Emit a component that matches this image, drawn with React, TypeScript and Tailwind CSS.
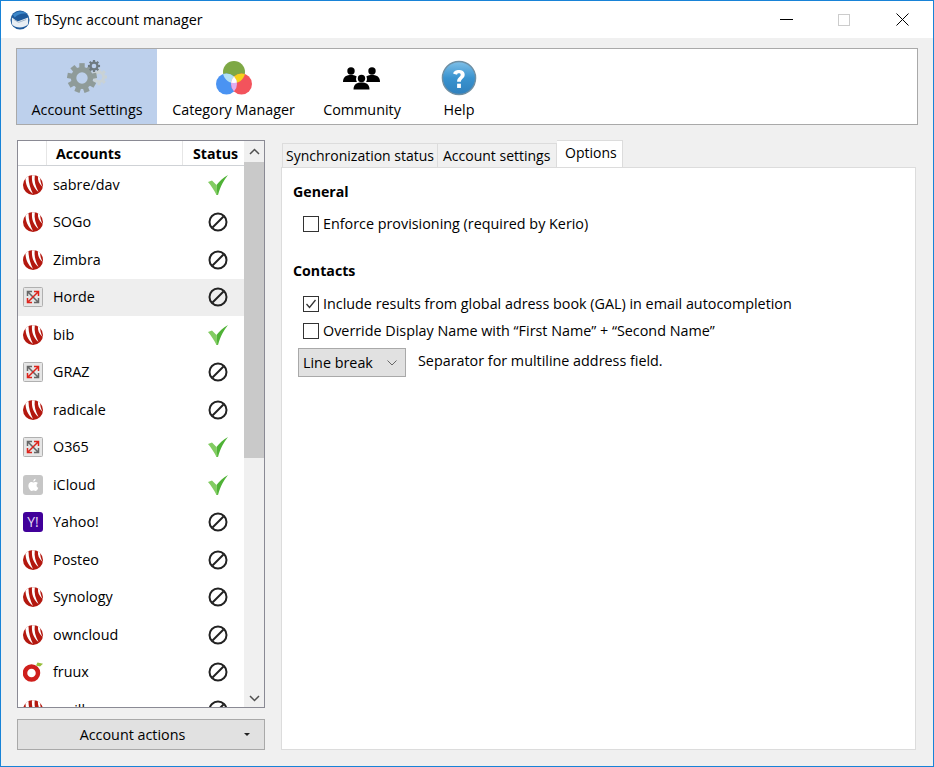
import React from "react";

function Sabre() {
  return (
    <svg width="20" height="20" viewBox="0 0 20 20">
      <circle cx="10" cy="10" r="10" fill="#b3180f" />
      <path d="M2.500 3 C2.500 9 4.500 14.500 10 19 C7.500 13.500 5.500 8 5.500 1.200 Z" fill="#fff" />
      <path d="M9 0.200 C8.500 7 10 12 15.500 17 C12.500 11.500 11 6 11.800 0.300 Z" fill="#fff" />
      <path d="M15 1.500 C14.500 5 16 9 19.700 12 C17.800 8.500 17 5 17.300 3 Z" fill="#fff" />
    </svg>
  );
}

function Exchange() {
  return (
    <svg width="20" height="20" viewBox="0 0 20 20">
      <rect x="0.500" y="0.500" width="19" height="19" rx="1" fill="#e6e6e6" stroke="#b0b0b0" />
      <g fill="none" strokeWidth="1.500">
        <path d="M4.500 9 L4.500 4.500 L9 4.500 M4.500 4.500 L15.500 15.500 M11 15.500 L15.500 15.500 L15.500 11" stroke="#666" />
        <path d="M11 4.500 L15.500 4.500 L15.500 9 M15.500 4.500 L4.500 15.500 M4.500 11 L4.500 15.500 L9 15.500" stroke="#dc241c" />
      </g>
    </svg>
  );
}

function ICloud() {
  return (
    <svg width="20" height="20" viewBox="0 0 20 20">
      <rect width="20" height="20" rx="3" fill="#c6c6c6" />
      <path d="M13.600 10.400c0-1.500 1.200-2.200 1.300-2.300-.7-1-1.800-1.200-2.200-1.200-.9-.1-1.800.6-2.300.6s-1.200-.6-2-.6c-1 0-2 .6-2.500 1.500-1.100 1.900-.3 4.600.8 6.100.5.700 1.100 1.600 1.900 1.500.8 0 1-.5 2-.5s1.200.5 2 .5 1.400-.8 1.900-1.500c.6-.8.8-1.600.8-1.700-.1 0-1.700-.6-1.700-2.400z" fill="#fff" />
      <path d="M12 5.700c.4-.5.7-1.200.6-1.900-.6 0-1.300.4-1.700.9-.4.400-.7 1.100-.6 1.800.7.100 1.300-.3 1.700-.8z" fill="#fff" />
    </svg>
  );
}

function Yahoo() {
  return (
    <div className="flex h-5 w-5 items-center justify-center rounded-[3px] bg-[#41009a] text-[14px] font-normal leading-none text-[#e6dcf4]">
      Y!
    </div>
  );
}

function Fruux() {
  return (
    <svg width="20" height="20" viewBox="0 0 20 20">
      <circle cx="8.500" cy="11" r="6.500" fill="none" stroke="#cf1f1c" strokeWidth="4.500" />
      <path d="M13 3.500 L14.500 0.500 L20 1.800 L17 4.500 Z" fill="#96bd3a" />
    </svg>
  );
}

function Check() {
  return (
    <svg width="20" height="20" viewBox="0 0 20 20">
      <path d="M8.500 10 C11 6.500 15 3 20 0 C16 5 12.500 11 10 20 L8.500 20 Z" fill="#4fb236" />
      <path d="M0 7 L4 5.500 L8.500 10 L9.500 20 L8.500 20 C6 15 3 10.500 0 7 Z" fill="#82cc62" />
    </svg>
  );
}

function Blocked() {
  return (
    <svg width="20" height="20" viewBox="0 0 20 20">
      <circle cx="10" cy="10" r="8.500" fill="none" stroke="#222" strokeWidth="2" />
      <path d="M4.500 15.500 L15.500 4.500" stroke="#222" strokeWidth="2" />
    </svg>
  );
}

function Gear({ cx, cy, r, hole, fill, teeth }: { cx: number; cy: number; r: number; hole: string; fill: string; teeth: number }) {
  const items = [];
  for (let i = 0; i < teeth; i++) {
    items.push(
      <rect
        key={i}
        x={cx - r * 0.2}
        y={cy - r * 1.1}
        width={r * 0.4}
        height={r * 0.5}
        fill={fill}
        transform={`rotate(${(360 / teeth) * i} ${cx} ${cy})`}
      />
    );
  }
  return (
    <g>
      {items}
      <circle cx={cx} cy={cy} r={r * 0.82} fill={fill} />
      <circle cx={cx} cy={cy} r={r * 0.42} fill={hole} />
    </g>
  );
}

function Gears() {
  return (
    <svg width="40" height="36" viewBox="0 0 40 36">
      <Gear cx={32} cy={17} r={7.500} hole="#bdd0ec" fill="#c9d2d6" teeth={8} />
      <Gear cx={15} cy={18} r={13.500} hole="#bdd0ec" fill="#8f9b99" teeth={9} />
      <Gear cx={27} cy={6} r={5.500} hole="#bdd0ec" fill="#6f7a80" teeth={8} />
    </svg>
  );
}

function Venn() {
  return (
    <svg width="36" height="36" viewBox="0 0 36 36">
      <defs>
        <clipPath id="c-top"><circle cx="18" cy="12" r="11" /></clipPath>
        <clipPath id="c-left"><circle cx="10.500" cy="24" r="10.500" /></clipPath>
      </defs>
      <circle cx="18" cy="12" r="11" fill="#7ea845" />
      <circle cx="10.500" cy="24" r="10.500" fill="#4a93f2" />
      <circle cx="25.500" cy="24" r="10.500" fill="#f3535c" />
      <g clipPath="url(#c-top)">
        <circle cx="10.500" cy="24" r="10.500" fill="#b4e1f5" />
        <circle cx="25.500" cy="24" r="10.500" fill="#f6d21c" />
      </g>
      <g clipPath="url(#c-left)">
        <circle cx="25.500" cy="24" r="10.500" fill="#e2aef0" />
        <g clipPath="url(#c-top)"><circle cx="25.500" cy="24" r="10.500" fill="#ffffff" /></g>
      </g>
    </svg>
  );
}

function People() {
  const Person = ({ x, y }: { x: number; y: number }) => (
    <g fill="#000">
      <circle cx={x} cy={y} r={3.700} />
      <path d={`M${x - 8} ${y + 11} C${x - 8} ${y + 5} ${x - 4} ${y + 4} ${x} ${y + 4} C${x + 4} ${y + 4} ${x + 8} ${y + 5} ${x + 8} ${y + 11} Z`} />
    </g>
  );
  return (
    <svg width="38" height="26" viewBox="0 0 38 26">
      <Person x={8} y={5} />
      <Person x={29} y={5} />
      <g fill="#fff">
        <circle cx="18.500" cy="13" r="5.500" />
        <rect x="9" y="16" width="19" height="10" rx="4" />
      </g>
      <Person x={18.500} y={12.500} />
    </svg>
  );
}

function HelpIcon() {
  return (
    <svg width="36" height="36" viewBox="0 0 38 38">
      <defs>
        <linearGradient id="help-g" x1="0" y1="0" x2="0" y2="1">
          <stop offset="0" stopColor="#7fc0e8" />
          <stop offset="0.5" stopColor="#3a93cf" />
          <stop offset="1" stopColor="#2f80bd" />
        </linearGradient>
      </defs>
      <circle cx="19" cy="19" r="17.500" fill="url(#help-g)" stroke="#6f8fa3" strokeWidth="1.500" />
      <path d="M13 14.500 C13 9.500 25 9 25 15.500 C25 19.500 21 19.500 21 23 L17 23 C17 18 20.800 18 20.800 15.500 C20.800 13.500 17 13.700 17 15.500 Z" fill="#fff" />
      <rect x="17" y="25" width="4" height="4.500" fill="#fff" />
    </svg>
  );
}

function TbIcon() {
  return (
    <svg width="20" height="20" viewBox="0 0 21 21">
      <circle cx="10.500" cy="10.500" r="10" fill="#1f5a9c" />
      <path d="M2 8 L8 12 L19 8 L19 15 C16 19 6 20 2 15 Z" fill="#e8eef4" />
      <path d="M4 10 L9 13 L17 10" fill="none" stroke="#9fb4c9" strokeWidth="1" />
      <path d="M3 5 C6 1 14 0 18 4 C14 3 8 4 5 8 Z" fill="#3d87c9" />
    </svg>
  );
}

type Acc = { name: string; icon: React.ReactNode; ok: boolean; hi?: boolean };
const accounts: Acc[] = [
  { name: "sabre/dav", icon: <Sabre />, ok: true },
  { name: "SOGo", icon: <Sabre />, ok: false },
  { name: "Zimbra", icon: <Sabre />, ok: false },
  { name: "Horde", icon: <Exchange />, ok: false, hi: true },
  { name: "bib", icon: <Sabre />, ok: true },
  { name: "GRAZ", icon: <Exchange />, ok: false },
  { name: "radicale", icon: <Sabre />, ok: false },
  { name: "O365", icon: <Exchange />, ok: true },
  { name: "iCloud", icon: <ICloud />, ok: true },
  { name: "Yahoo!", icon: <Yahoo />, ok: false },
  { name: "Posteo", icon: <Sabre />, ok: false },
  { name: "Synology", icon: <Sabre />, ok: false },
  { name: "owncloud", icon: <Sabre />, ok: false },
  { name: "fruux", icon: <Fruux />, ok: false },
  { name: "mailbox.org", icon: <Sabre />, ok: false },
];

function ToolTab({ label, icon, selected, w }: { label: string; icon: React.ReactNode; selected?: boolean; w: string }) {
  return (
    <div className={`flex h-full flex-col items-center ${w} ${selected ? "bg-[#bdd0ec]" : ""}`}>
      <div className="flex h-[47px] items-end justify-center">{icon}</div>
      <div className="mt-[4px] text-[14.35px] leading-5 whitespace-nowrap">{label}</div>
    </div>
  );
}

function Box({ checked }: { checked?: boolean }) {
  return (
    <div className="flex h-4 w-4 shrink-0 items-center justify-center border border-[#333] bg-white">
      {checked && (
        <svg width="12" height="12" viewBox="0 0 12 12">
          <path d="M1.500 6 L4.500 9.500 L10.500 2" fill="none" stroke="#333" strokeWidth="1.300" />
        </svg>
      )}
    </div>
  );
}

export default function App() {
  return (
    <div className="flex h-[767px] w-[934px] flex-col border border-[#1883d7] bg-[#f0f0f0] text-[14.35px] text-black [font-family:'Open_Sans','Noto_Sans',sans-serif]">
      <div className="flex h-[37px] shrink-0 items-center bg-white pl-[9px]">
        <TbIcon />
        <div className="ml-[5px]">TbSync account manager</div>
        <div className="ml-auto flex items-center">
          <svg width="13" height="1" className="mr-[45px]"><rect width="13" height="1" fill="#000" /></svg>
          <svg width="12" height="12" className="mr-[46px]"><rect x="0.500" y="0.500" width="11" height="11" fill="none" stroke="#ccc" /></svg>
          <svg width="13" height="13" className="mr-[24px]"><path d="M0.500 0.500 L12.500 12.500 M12.500 0.500 L0.500 12.500" stroke="#000" strokeWidth="1" /></svg>
        </div>
      </div>

      <div className="mx-[15px] mt-[10px] flex h-[77px] shrink-0 border border-[#a9a9a9] bg-white">
        <ToolTab label="Account Settings" icon={<Gears />} selected w="w-[140px]" />
        <ToolTab label="Category Manager" icon={<Venn />} w="w-[153px]" />
        <ToolTab label="Community" icon={<div className="pb-[4px]"><People /></div>} w="w-[104px]" />
        <ToolTab label="Help" icon={<HelpIcon />} w="w-[90px]" />
      </div>

      <div className="mt-[15px] flex min-h-0 flex-1 pb-[16px] pl-[16px] pr-[17px]">
        <div className="flex w-[248px] shrink-0 flex-col">
          <div className="flex h-[568px] overflow-hidden border border-[#8a8a94] bg-white">
            <div className="min-w-0 flex-1 overflow-hidden">
              <div className="flex h-[25px] border-b border-[#cfd2d6] text-[14.2px] font-bold">
                <div className="w-[29px] border-r border-[#e6e6e6]" />
                <div className="w-[136px] border-r border-[#e6e6e6] pl-[9px] pt-[1px] leading-6">Accounts</div>
                <div className="flex-1 pl-[10px] pt-[1px] leading-6">Status</div>
              </div>
              {accounts.map((a) => (
                <div key={a.name} className={`flex h-[37.5px] items-center ${a.hi ? "bg-[#eeeeee]" : ""}`}>
                  <div className="flex w-[30px] shrink-0 justify-center">{a.icon}</div>
                  <div className="ml-[5px] w-[145px] shrink-0 leading-5">{a.name}</div>
                  <div className="flex w-[40px] shrink-0 justify-center">{a.ok ? <Check /> : <Blocked />}</div>
                </div>
              ))}
            </div>
            <div className="flex w-[20px] shrink-0 flex-col bg-[#f0f0f0]">
              <div className="flex h-[21px] items-center justify-center">
                <svg width="11" height="7"><path d="M1 6 L5.500 1.500 L10 6" fill="none" stroke="#505050" strokeWidth="1.500" /></svg>
              </div>
              <div className="h-[296px] bg-[#c9c9c9]" />
              <div className="mt-auto flex h-[21px] items-center justify-center pt-[3px]">
                <svg width="11" height="7"><path d="M1 1 L5.500 5.500 L10 1" fill="none" stroke="#505050" strokeWidth="1.500" /></svg>
              </div>
            </div>
          </div>
          <div className="relative mt-[11px] flex h-[31px] items-center justify-center border border-[#a9a9a9] bg-[#e1e1e1]">
            <span className="pr-[17px]">Account actions</span>
            <span className="absolute right-[14px] top-[13px] h-0 w-0 border-x-[3px] border-t-[3px] border-x-transparent border-t-[#222]" />
          </div>
        </div>

        <div className="ml-[16px] flex min-w-0 flex-1 flex-col">
          <div className="flex h-[27px] shrink-0 items-end pl-[1px] text-[14px]">
            <div className="flex h-[24px] w-[155px] items-center border-l border-t border-[#dcdcdc] bg-[#f0f0f0] pl-[3px]">Synchronization status</div>
            <div className="flex h-[24px] w-[120px] items-center border-x border-t border-[#dcdcdc] bg-[#f0f0f0] pl-[5px]">Account settings</div>
            <div className="flex h-[27px] w-[66px] items-center border-r border-t border-[#dcdcdc] bg-white pb-[3px] pl-[8px]">Options</div>
          </div>
          <div className="flex-1 border border-[#dcdcdc] bg-white pl-[11px] pt-[14px]">
            <div className="text-[14.2px] font-bold leading-5">General</div>
            <div className="ml-[10px] mt-[12px] flex h-5 items-center gap-[4px]">
              <Box /> <span>Enforce provisioning (required by Kerio)</span>
            </div>
            <div className="mt-[27px] text-[14.2px] font-bold leading-5">Contacts</div>
            <div className="ml-[10px] mt-[13px] flex h-5 items-center gap-[4px]">
              <Box checked /> <span>Include results from global adress book (GAL) in email autocompletion</span>
            </div>
            <div className="ml-[10px] mt-[7px] flex h-5 items-center gap-[4px]">
              <Box /> <span>Override Display Name with “First Name” + “Second Name”</span>
            </div>
            <div className="ml-[5px] mt-[7px] flex items-center">
              <div className="flex h-[29px] w-[108px] items-center justify-between border border-[#a9a9a9] bg-[#e1e1e1] pl-[4px] pr-[8px]">
                <span>Line break</span>
                <svg width="10" height="6"><path d="M0.500 0.500 L5 5 L9.500 0.500" fill="none" stroke="#666" strokeWidth="1" /></svg>
              </div>
              <span className="ml-[12px] -mt-[3px]">Separator for multiline address field.</span>
            </div>
          </div>
        </div>
      </div>
    </div>
  );
}
